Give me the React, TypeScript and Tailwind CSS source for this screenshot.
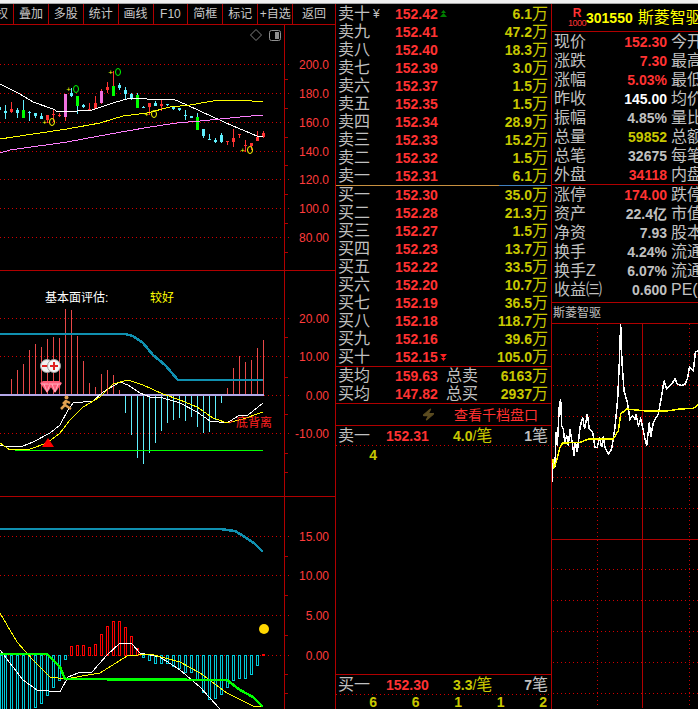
import type { ReactNode } from 'react'
import { Zap } from 'lucide-react'

const GRID = '#b00000'
const DOT = '#d00000'
const AXIS = '#ff3c3c'

type Candle = [x: number, hi: number, lo: number, top: number, bottom: number, body: string, wick?: string]

const C = '#60f0ff'
const R = '#ff3232'
const G = '#00ff00'
const P = '#f070e0'

const candles: Candle[] = [
  [-1, 107, 110, 107, 110, C],
  [5, 105, 119, 111, 113, C],
  [11, 102, 113, 109, 112, R],
  [17, 108, 118, 110, 113, C],
  [23, 100, 118, 110, 118, G, C],
  [29, 111, 121, 112, 113, C],
  [35, 113, 118, 113, 116, C],
  [41, 113, 119, 116, 119, C],
  [47, 115, 123, 115, 120, R],
  [53, 110, 122, 114, 115, R],
  [59, 113, 117, 115, 116, R],
  [65, 94, 121, 94, 117, P, R],
  [71, 88, 97, 93, 96, C],
  [77, 96, 114, 96, 106, G, C],
  [83, 104, 108, 105, 107, C],
  [89, 103, 110, 109, 110, R],
  [95, 96, 109, 103, 109, R],
  [101, 89, 104, 91, 103, P, R],
  [107, 82, 93, 87, 90, R],
  [113, 71, 96, 86, 96, G, R],
  [119, 83, 90, 85, 88, C],
  [125, 87, 99, 90, 94, C],
  [131, 93, 100, 94, 99, C],
  [137, 93, 108, 95, 108, G, C],
  [143, 106, 108, 107, 108, C],
  [149, 103, 115, 103, 107, R],
  [155, 101, 106, 103, 106, C],
  [161, 100, 111, 104, 106, R],
  [167, 104, 106, 104, 105, C],
  [173, 106, 110, 107, 109, C],
  [179, 108, 111, 108, 110, C],
  [185, 110, 120, 115, 116, C],
  [191, 116, 118, 116, 118, C],
  [197, 113, 130, 117, 130, G, C],
  [203, 129, 138, 129, 136, C],
  [209, 134, 140, 139, 140, C],
  [215, 138, 143, 140, 142, C],
  [221, 133, 143, 135, 142, C],
  [227, 141, 145, 141, 142, R],
  [233, 129, 147, 138, 142, R],
  [239, 134, 138, 134, 135, R],
  [245, 140, 152, 145, 146, R],
  [251, 143, 150, 143, 146, R],
  [257, 131, 141, 137, 141, R],
  [263, 131, 138, 133, 137, R],
]

function Line({ points, color, width = 1 }: { points: string; color: string; width?: number }) {
  return <polyline points={points} fill="none" stroke={color} strokeWidth={width} shapeRendering="crispEdges" />
}

function Dotted({ x1, y1, x2, y2 }: { x1: number; y1: number; x2: number; y2: number }) {
  return <line x1={x1} y1={y1} x2={x2} y2={y2} stroke={DOT} strokeDasharray="1 3" />
}

// price axis: solid line at x=284, ticks, dotted guide lines and the labels
function Axis({ top, bottom, labels, ticks }: { top: number; bottom: number; labels: [string, number][]; ticks: number[] }) {
  return (
    <g>
      <line x1={284.5} y1={top} x2={284.5} y2={bottom} stroke={GRID} shapeRendering="crispEdges" />
      {ticks.map((y) => (
        <line key={y} x1={285} y1={y + 0.5} x2={288} y2={y + 0.5} stroke={GRID} shapeRendering="crispEdges" />
      ))}
      {labels.map(([text, y]) => (
        <g key={text}>
          <Dotted x1={0} y1={y + 0.5} x2={290} y2={y + 0.5} />
          <text x={329} y={y + 4.5} textAnchor="end" fill={AXIS} className="text-[12px]">
            {text}
          </text>
        </g>
      ))}
    </g>
  )
}

function CandlePanel() {
  return (
    <svg width={335} height={245} viewBox="0 25 335 245" className="block">
      <Axis
        top={25}
        bottom={270}
        ticks={[79, 108, 137, 165, 194, 223, 252]}
        labels={[['200.0', 64], ['180.0', 93], ['160.0', 122], ['140.0', 151], ['120.0', 179], ['100.0', 208], ['80.00', 237]]}
      />
      <polygon points="256,29.5 261.5,35 256,40.5 250.5,35" fill="none" stroke="#808080" />
      <rect x={269.5} y={30.5} width={11} height={10} rx={2} fill="none" stroke="#909090" />
      <rect x={275} y={32} width={4} height={7} fill="#909090" />
      {candles.map(([x, hi, lo, top, bottom, body, wick]) => (
        <g key={x} shapeRendering="crispEdges">
          <rect x={x} y={hi} width={1} height={lo - hi} fill={wick ?? body} />
          <rect x={x - 1} y={top} width={3} height={bottom - top} fill={body} />
        </g>
      ))}
      <Line color="#ffffff" points="0,84 20,94 33,102 53,109 58,112 77,111 92,110 113,103 130,98 140,98 147,99 173,99 187,105 213,117 233,126 257,136 263,137" />
      <Line color="#ffff00" points="0,139 33,134 67,129 100,123 123,116 147,113 170,107 190,105 213,101 240,100 263,102" />
      <Line color="#ff80ff" points="0,153 10,150 67,142 110,134 150,127 177,123 200,121 220,119 240,117 263,115" />
      {[[118, 72, '#00ff00'], [76, 89, '#00ff00'], [52, 122, '#ffff00'], [154, 114, '#ffff00'], [250, 150, '#ffff00']].map(([x, y, color]) => (
        <g key={String(x)}>
          <ellipse cx={x as number} cy={y as number} rx={2.5} ry={3.5} fill="none" stroke={color as string} />
          <text x={(x as number) - 5} y={(y as number) + 3} textAnchor="end" fill="#ffff00" className="text-[8px]">
            +
          </text>
        </g>
      ))}
    </svg>
  )
}

const macdRed = [379, 370, 364, 350, 344, 347, 339, 337, 338, 309, 310, 336, 361, 383, 387, 374, 370, 375, 390]
const macdCyan = [413, 435, 458, 464, 453, 443, 431, 423, 420, 418, 421, 417, 427, 433, 432, 420, 403]
const macdRedEnd = [388, 368, 356, 362, 360, 348, 340]

function MacdPanel() {
  return (
    <svg width={335} height={225} viewBox="0 271 335 225" className="block">
      <Axis
        top={271}
        bottom={496}
        ticks={[337, 377, 414, 453, 472]}
        labels={[['20.00', 318], ['10.00', 356], ['0.00', 395], ['-10.00', 433]]}
      />
      <text x={45} y={302} fill="#ffffff" className="text-[12px]">基本面评估:</text>
      <text x={150} y={302} fill="#ffff00" className="text-[12px]">较好</text>
      <g shapeRendering="crispEdges">
        {macdRed.map((y, i) => (
          <rect key={i} x={11 + i * 6} y={y} width={1} height={395 - y} fill="#e84848" />
        ))}
        {macdRedEnd.map((y, i) => (
          <rect key={i} x={227 + i * 6} y={y} width={1} height={395 - y} fill="#e84848" />
        ))}
        {macdCyan.map((y, i) => (
          <rect key={i} x={125 + i * 6} y={395} width={1} height={y - 395} fill={C} />
        ))}
        <rect x={0} y={394} width={264} height={2} fill="#b4a8e8" />
        <rect x={15} y={450} width={248} height={1} fill="#00ff00" />
      </g>
      <Line color="#1090b0" width={2.5} points="0,334 125,334 133,336 143,343 153,355 165,365 178,380 263,380" />
      <Line color="#ffffff" points="0,445 8,447 23,446 33,442 50,433 60,425 68,410 73,403 93,401 103,392 120,382 128,385 140,393 150,397 163,398 180,403 197,412 210,421 227,423 238,416 248,415 263,403" />
      <Line color="#ffff00" points="0,443 10,450 30,449 47,443 60,433 70,420 83,407 100,397 113,384 128,380 143,385 163,394 180,400 197,407 213,418 227,423 243,419 263,412" />
      <polygon points="48,438 54,447 42,447" fill="#ff0000" />
      <circle cx={47} cy={366} r={6.5} fill="#f0f0f0" stroke="#a0a0a0" />
      <rect x={42} y={365} width={7} height={2} fill="#e02020" />
      <circle cx={54} cy={366} r={6.5} fill="#f4f4f4" stroke="#a0a0a0" />
      <path d="M50 365h8v2h-8zM53 362h2v8h-2z" fill="#e02020" />
      {[47, 55].map((x) => (
        <g key={x}>
          <polygon points={`${x - 7},383 ${x - 4},381 ${x + 4},381 ${x + 7},383 ${x},393`} fill="#ff5c78" />
          <path d={`M${x - 6} 384h12M${x - 3} 384l3 8l3 -8`} stroke="#ffb0c0" fill="none" />
        </g>
      ))}
      {/* running man */}
      <circle cx={66.5} cy={397.5} r={2} fill="#e0a050" />
      <path d="M66 400l-1 5l-4 4M65 405l6 4M66 401l-3 3M66 401l4 2" stroke="#e0a050" strokeWidth={2.5} fill="none" />
      <path d="M233 421l-4 2" stroke="#ff2020" />
      <text x={236} y={427} fill="#ff2020" className="text-[12px]">底背离</text>
    </svg>
  )
}

const kdjRed = [646, 645, 645, 647, 644, 634, 626, 621, 621, 627, 636, 648]
const kdjCyanLeft = [709, 709, 709, 709, 709, 707, 703, 695, 687, 680, 659]
const kdjCyanRight = [657, 660, 663, 663, 663, 666, 668, 672, 672, 680, 692, 699, 698, 694, 687, 680, 678, 678, 674, 665]

function KdjPanel() {
  return (
    <svg width={335} height={212} viewBox="0 497 335 212" className="block">
      <Axis
        top={497}
        bottom={709}
        ticks={[556, 595, 635, 674, 693]}
        labels={[['15.00', 536], ['10.00', 575], ['5.00', 615], ['0.00', 655]]}
      />
      <Line color="#1090b0" width={2.5} points="0,529 220,529 235,531 245,537 255,544 263,552" />
      <g shapeRendering="crispEdges" fill="none">
        <rect x={0.5} y={655.5} width={2} height={54} stroke="#00c8d8" />
        {kdjCyanLeft.map((y, i) => (
          <rect key={i} x={4.5 + i * 6} y={655.5} width={2} height={y - 655} stroke="#00c8d8" />
        ))}
        {kdjRed.map((y, i) => (
          <rect key={i} x={70.5 + i * 6} y={y + 0.5} width={2} height={655 - y} stroke="#ff0000" />
        ))}
        {kdjCyanRight.map((y, i) => (
          <rect key={i} x={142.5 + i * 6} y={655.5} width={2} height={y - 655} stroke="#00c8d8" />
        ))}
      </g>
      <rect x={262} y={654} width={3} height={2} fill="#ff0000" />
      <circle cx={264} cy={629} r={5} fill="#ffd700" />
      <Line color="#ffffff" points="0,650 13,667 23,680 37,690 60,692 68,677 78,673 92,672 107,655 120,643 132,644 140,653 160,657 180,670 200,687 220,709" />
      <Line color="#ffff00" points="0,613 17,642 33,660 50,677 65,679 100,673 127,656 150,654 180,662 200,673 227,693 253,706 263,707" />
      <Line color="#00ff00" width={2.5} points="0,654 47,654 60,667 65,679 227,680 240,690 253,697 263,707" />
    </svg>
  )
}

const toolbarItems = ['叠加', '多股', '统计', '画线', 'F10', '简框', '标记', '+自选']

function Toolbar() {
  return (
    <div className="flex h-[21px] shrink-0 border-b border-[#b00000] text-[12px] leading-none text-[#c8c8c8]">
      <div className="flex w-[14px] items-center justify-end overflow-hidden border-r border-[#b00000]">
        <span className="shrink-0 pr-[5px]">权</span>
      </div>
      {toolbarItems.map((item) => (
        <div key={item} className="flex w-[35px] items-center justify-center border-r border-[#b00000]">
          {item}
        </div>
      ))}
      <div className="flex w-[42px] items-center justify-center">返回</div>
    </div>
  )
}

const sellRows = [
  ['卖十', '152.42', '6.1'],
  ['卖九', '152.41', '47.2'],
  ['卖八', '152.40', '18.3'],
  ['卖七', '152.39', '3.0'],
  ['卖六', '152.37', '1.5'],
  ['卖五', '152.35', '1.5'],
  ['卖四', '152.34', '28.9'],
  ['卖三', '152.33', '15.2'],
  ['卖二', '152.32', '1.5'],
  ['卖一', '152.31', '6.1'],
]

const buyRows = [
  ['买一', '152.30', '35.0'],
  ['买二', '152.28', '21.3'],
  ['买三', '152.27', '1.5'],
  ['买四', '152.23', '13.7'],
  ['买五', '152.22', '33.5'],
  ['买六', '152.20', '10.7'],
  ['买七', '152.19', '36.5'],
  ['买八', '152.18', '118.7'],
  ['买九', '152.16', '39.6'],
  ['买十', '152.15', '105.0'],
]

function Vol({ value }: { value: string }) {
  return (
    <span className="ml-auto flex items-center text-[#c8c800]">
      <span className="text-[14px] font-bold">{value}</span>
      <span className="text-[16px]">万</span>
    </span>
  )
}

function BookRow({ label, price, vol, mark }: { label: string; price: string; vol: string; mark?: ReactNode }) {
  return (
    <div className="relative flex h-[18px] items-center pr-[3px] pl-[2px] leading-none">
      <span className="w-[57px] text-[16px] text-[#c0c0c0]">{label}</span>
      <span className="text-[14px] font-bold text-[#ff3232]">{price}</span>
      {mark}
      <Vol value={vol} />
    </div>
  )
}

function Arrows({ color, down }: { color: string; down?: boolean }) {
  return (
    <svg width={7} height={8} viewBox="0 0 7 8" className={down ? 'ml-[2px] rotate-180' : 'ml-[2px]'}>
      <path d="M3.5 0L6 3H1zM3.5 3L7 7H0z" fill={color} />
    </svg>
  )
}

const dottedRule = 'h-[1px] shrink-0 bg-[repeating-linear-gradient(90deg,#d00000_0,#d00000_1px,transparent_1px,transparent_4px)]'

function TradeRow({ label, price, vol, count }: { label: string; price: string; vol: string; count: string }) {
  return (
    <>
      <div className="flex h-[19px] shrink-0 items-center pr-[3px] pl-[2px] leading-none">
        <span className="w-[48px] text-[16px] text-[#c0c0c0]">{label}</span>
        <span className="w-[67px] text-[14px] font-bold text-[#ff3232]">{price}</span>
        <span className="flex items-center text-[#c8c800]">
          <span className="text-[14px] font-bold">{vol}</span>
          <span className="text-[14px]">/</span>
          <span className="text-[16px]">笔</span>
        </span>
        <span className="ml-auto flex items-center text-[#c0c0c0]">
          <span className="text-[14px] font-bold">{count}</span>
          <span className="text-[16px]">笔</span>
        </span>
      </div>
      <div className={dottedRule} />
    </>
  )
}

function OrderBook() {
  return (
    <div className="flex w-[216px] shrink-0 flex-col overflow-hidden border-r border-[#b00000] pt-[1px]">
      {sellRows.map(([label, price, vol]) => (
        <BookRow
          key={label}
          label={label}
          price={price}
          vol={vol}
          mark={
            label === '卖十' ? (
              <>
                <span className="absolute top-[3px] left-[37px] text-[12px] text-[#c0c0c0]">¥</span>
                <Arrows color="#008000" />
              </>
            ) : undefined
          }
        />
      ))}
      <div className="flex h-[1px] shrink-0">
        <div className="w-[163px] bg-[#c89040]" />
        <div className="flex-1 bg-[#4080c0]" />
      </div>
      {buyRows.map(([label, price, vol]) => (
        <BookRow
          key={label}
          label={label}
          price={price}
          vol={vol}
          mark={label === '买十' ? <Arrows color="#ff2020" down /> : undefined}
        />
      ))}
      <div className="border-y border-[#b00000]">
        {[
          ['卖均', '159.63', '总卖', '6163'],
          ['买均', '147.82', '总买', '2937'],
        ].map(([label, price, total, vol]) => (
          <div key={label} className="flex h-[18px] items-center pr-[3px] pl-[2px] leading-none">
            <span className="w-[57px] text-[16px] text-[#c0c0c0]">{label}</span>
            <span className="w-[51px] text-[14px] font-bold text-[#ff3232]">{price}</span>
            <span className="text-[16px] text-[#c0c0c0]">{total}</span>
            <Vol value={vol} />
          </div>
        ))}
      </div>
      <div className="flex h-[22px] shrink-0 items-center border-b border-[#b00000] text-[14px] leading-none text-[#ff3030]">
        <Zap className="ml-[86px] h-[13px] w-[13px] -skew-x-12 fill-[#5c4c20] text-[#5c4c20]" />
        <span className="ml-[19px]">查看千档盘口</span>
      </div>
      <TradeRow label="卖一" price="152.31" vol="4.0" count="1" />
      <div className="flex h-[18px] shrink-0 items-center pl-[16px] text-[14px] leading-none font-bold text-[#c8c800]">
        <span className="w-[42.5px] text-center">4</span>
      </div>
      <div className="min-h-0 flex-1 border-b border-[#b00000]" />
      <TradeRow label="买一" price="152.30" vol="3.3" count="7" />
      <div className="flex pl-[16px] text-[14px] leading-none font-bold text-[#c8c800]">
        {['6', '6', '1', '1', '2'].map((n, i) => (
          <span key={i} className="w-[42.5px] shrink-0 text-center">
            {n}
          </span>
        ))}
      </div>
    </div>
  )
}

const quoteTop: [string, string, string, string][] = [
  ['现价', '152.30', 'text-[#ff3232]', '今开'],
  ['涨跌', '7.30', 'text-[#ff3232]', '最高'],
  ['涨幅', '5.03%', 'text-[#ff3232]', '最低'],
  ['昨收', '145.00', 'text-[#ffffff]', '均价'],
  ['振幅', '4.85%', 'text-[#c0c0c0]', '量比'],
  ['总量', '59852', 'text-[#c8c800]', '总额'],
  ['总笔', '32675', 'text-[#c0c0c0]', '每笔'],
  ['外盘', '34118', 'text-[#ff3232]', '内盘'],
]

const quoteBottom: [string, string, string, string][] = [
  ['涨停', '174.00', 'text-[#ff3232]', '跌停'],
  ['资产', '22.4亿', 'text-[#c0c0c0]', '市值'],
  ['净资', '7.93', 'text-[#c0c0c0]', '股本'],
  ['换手', '4.24%', 'text-[#c0c0c0]', '流通'],
  ['换手Z', '6.07%', 'text-[#c0c0c0]', '流通'],
  ['收益㈢', '0.600', 'text-[#c0c0c0]', 'PE(动'],
]

function QuoteRow({ row }: { row: [string, string, string, string] }) {
  const [label, value, color, other] = row
  return (
    <div className="flex h-[19px] items-center pl-[2px] leading-none whitespace-nowrap">
      <span className="w-[48px] shrink-0 text-[16px] text-[#c0c0c0]">{label}</span>
      <span className={`w-[65px] shrink-0 text-right text-[14px] font-bold ${color}`}>{value}</span>
      <span className="ml-[4px] text-[16px] text-[#c0c0c0]">{other}</span>
    </div>
  )
}

const zoomToPage = (pts: number[][]) => pts.map(([x, y]) => `${550 + x / 3},${320 + y / 3}`).join(' ')

const minutePrice = zoomToPage([
  [8, 490], [8, 435], [15, 440], [18, 340], [22, 380], [28, 260], [32, 240], [35, 320], [40, 330], [44, 370], [50, 350], [55, 380],
  [60, 330], [65, 360], [72, 410], [76, 370], [82, 400], [90, 325], [98, 295], [104, 330], [112, 285], [118, 330], [128, 340],
  [135, 385], [142, 385], [148, 355], [155, 385], [160, 352], [165, 385], [175, 405], [185, 390], [195, 325], [203, 240], [208, 130],
  [212, 15], [216, 130], [222, 215], [232, 250], [240, 300], [248, 290], [255, 300], [258, 285], [265, 320], [272, 300], [278, 325],
  [285, 360], [290, 380], [298, 310], [302, 355], [310, 310], [325, 285], [335, 230], [342, 185], [350, 210], [358, 200], [365, 195],
  [375, 180], [382, 195], [395, 200], [405, 195], [412, 180], [418, 145], [430, 155], [436, 100], [444, 95],
])

const minuteAvg = zoomToPage([
  [8, 420], [12, 445], [20, 425], [30, 385], [38, 372], [90, 370], [115, 360], [190, 360], [205, 335], [212, 285], [230, 270],
  [290, 276], [350, 276], [390, 270], [430, 268], [444, 258],
])

function MinuteChart() {
  return (
    <svg width={146} height={384} viewBox="552 325 146 384" className="block">
      {[355, 386, 417, 447, 478, 509, 570, 601, 632, 663, 694].map((y) => (
        <Dotted key={y} x1={553} y1={y + 0.5} x2={698} y2={y + 0.5} />
      ))}
      <Dotted x1={597.5} y1={325} x2={597.5} y2={709} />
      <Dotted x1={689.5} y1={325} x2={689.5} y2={709} />
      <line x1={642.5} y1={325} x2={642.5} y2={709} stroke={GRID} strokeWidth={1} shapeRendering="crispEdges" />
      <line x1={552} y1={540.5} x2={698} y2={540.5} stroke={GRID} shapeRendering="crispEdges" />
      <Line color="#ffffff" width={1.5} points={minutePrice} />
      <Line color="#ffff00" width={1.5} points={minuteAvg} />
    </svg>
  )
}

function QuotePanel() {
  return (
    <div className="flex w-[146px] shrink-0 flex-col overflow-hidden">
      <div className="flex h-[28px] shrink-0 items-center border-b border-[#b00000] leading-none whitespace-nowrap">
        <div className="ml-[17px] flex w-[16px] flex-col items-center text-[#ff3232]">
          <span className="text-[12px] font-bold">R</span>
          <span className="text-[9px] tracking-[-0.5px]">1000</span>
        </div>
        <span className="ml-[1px] text-[14px] font-bold text-[#ffff00]">301550</span>
        <span className="ml-[5px] text-[16px] text-[#ffff00]">斯菱智驱</span>
      </div>
      <div className="h-[153px] shrink-0 border-b border-[#b00000]">
        {quoteTop.map((row) => (
          <QuoteRow key={row[0]} row={row} />
        ))}
      </div>
      <div className="h-[118px] shrink-0 border-b border-[#b00000]">
        {quoteBottom.map((row) => (
          <QuoteRow key={row[0]} row={row} />
        ))}
      </div>
      <div className="flex h-[21px] shrink-0 items-center border-b border-[#b00000] pl-[1px] text-[12px] leading-none text-[#c0c0c0]">
        斯菱智驱
      </div>
      <MinuteChart />
    </div>
  )
}

export default function App() {
  return (
    <div className="flex h-[709px] w-[698px] flex-col overflow-hidden bg-black font-['Liberation_Sans','Noto_Sans_CJK_SC',sans-serif]">
      <div className="h-[4px] shrink-0 border-b border-[#a8a8a8] bg-[#f0f0f0]" />
      <div className="flex min-h-0 flex-1">
        <div className="flex w-[336px] shrink-0 flex-col border-r border-[#b00000]">
          <Toolbar />
          <div className="h-[246px] shrink-0 border-b border-[#b00000]">
            <CandlePanel />
          </div>
          <div className="h-[226px] shrink-0 border-b border-[#b00000]">
            <MacdPanel />
          </div>
          <div className="min-h-0 flex-1">
            <KdjPanel />
          </div>
        </div>
        <OrderBook />
        <QuotePanel />
      </div>
    </div>
  )
}
